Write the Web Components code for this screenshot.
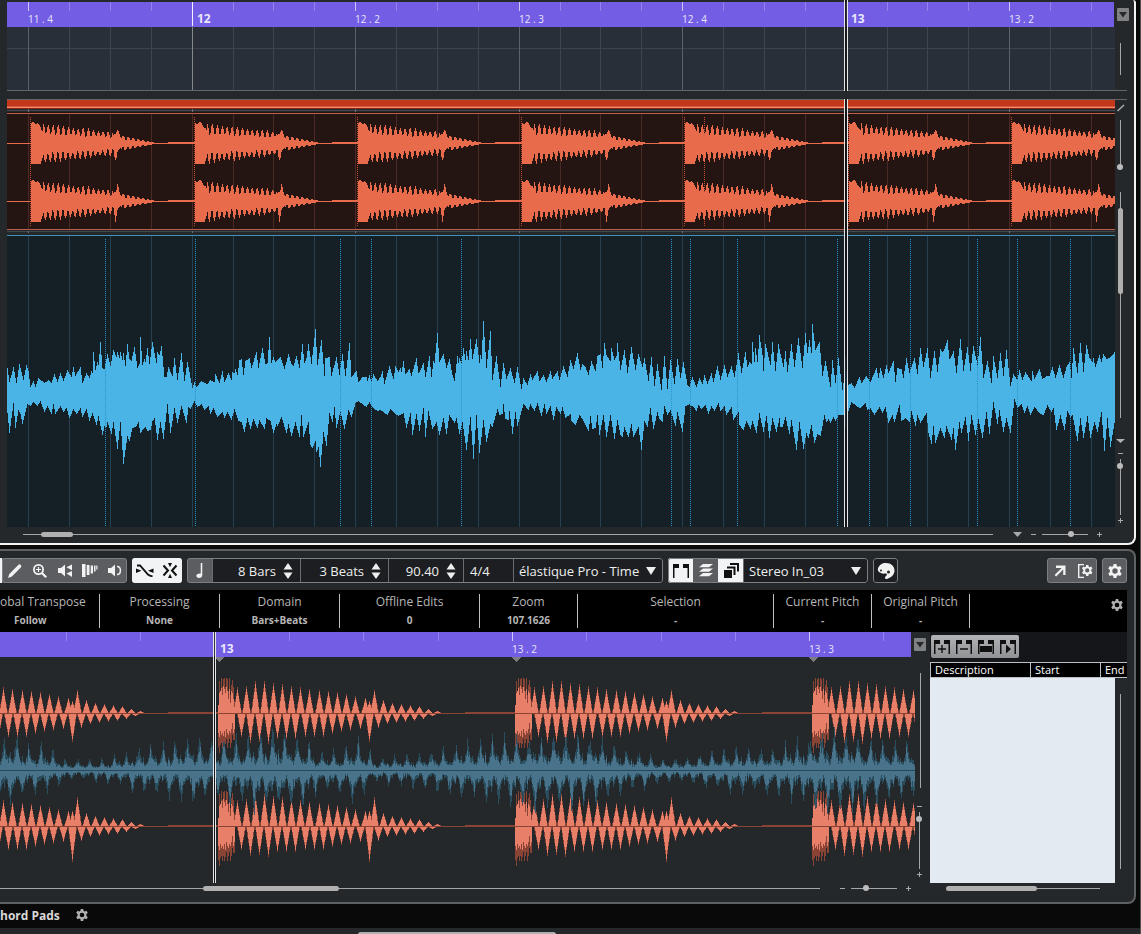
<!DOCTYPE html>
<html lang="en">
<head>
<meta charset="utf-8">
<title>Audio Editor</title>
<style>
  html, body { margin: 0; background: #090909; }
  body { font-family: "Open Sans", "Noto Sans", sans-serif; font-size: 12px; color: #e4e4e4; overflow: hidden; }
</style>
</head>
<body>
<daw-app></daw-app>
<script>
const RESET = `
  *, *::before, *::after { box-sizing: border-box; }
  button, input, select { font: inherit; color: inherit; margin: 0; padding: 0; border: 0; border-radius: 0; background: none; min-width: 0; }
  svg { display: block; }
`;
function define(name, html, setup) {
  const tpl = document.createElement('template');
  customElements.define(name, class extends HTMLElement {
    connectedCallback() {
      if (this.shadowRoot) return;
      tpl.innerHTML = typeof html === 'function' ? html(this) : html;
      this.attachShadow({ mode: 'open' }).append(tpl.content.cloneNode(true));
      if (setup) setup(this, this.shadowRoot);
    }
  });
}

/* ---------- icons ---------- */
const GEAR = '<path fill-rule="evenodd" d="M6.6 0h2.8l.5 2.2 1.2.6 2.1-.8 1.5 2.4-1.6 1.6v2l1.6 1.6-1.5 2.4-2.1-.8-1.2.6-.5 2.2H6.600l-.5-2.200-1.200-.6-2.100.8-1.500-2.400L2.900 8V6L1.300 4.400 2.800 2l2.100.8 1.200-.6zM8 4.300a2.700 2.700 0 1 0 0 5.400 2.700 2.700 0 0 0 0-5.400z"/>';
const ICONS = {
  pencil: ['16 16', '<path d="M1 15l1.300-4L11.500 1.800q1.200-1 2.300.1t.2 2.300L4.900 13.600z"/>'],
  zoom: ['16 16', '<circle cx="6.500" cy="6.500" r="4.600" fill="none" stroke="currentColor" stroke-width="1.800"/><path d="M10.400 8.900l4.600 4.600-1.600 1.600-4.600-4.600zM4 5.900h5v1.200H4zM5.900 4h1.200v5H5.900z"/>'],
  scrub: ['16 16', '<path d="M1 5h3l4-3.500v12L4 10H1zM9.500 4.300L15 1.500v5.700zM9.500 10.500L15 8v6z"/>'],
  warp: ['16 16', '<path d="M0 1h3.500v13H0zM4.700 2H7.500v10H4.700zM8.700 2.500H11v8H8.700zM12 2.500h1.500v6H12zM14.300 2.500h1.200v4h-1.200z"/>'],
  speaker: ['16 16', '<path d="M1 5h3l4-3.500v12L4 10H1z"/><path d="M10 3.500q3.400-.2 3.400 4t-3.400 4" fill="none" stroke="currentColor" stroke-width="1.500"/>'],
  snapzero: ['18 16', '<path d="M1 2.500h3l8 9q2 1.800 4.500 1.500" fill="none" stroke="currentColor" stroke-width="1.800"/><path d="M0 5.500L5.500 7.800 0 10zM17.500 5.500V10L12 7.800z"/>'],
  snap: ['16 16', '<path d="M6 0h4L8 4.200zM6 15h4L8 10.800z"/><path d="M1.500 2.500L6 7.500l-4.500 5M14.500 2.500L10 7.500l4.500 5" fill="none" stroke="currentColor" stroke-width="2"/>'],
  note: ['16 16', '<path d="M8.700 0h1.600v12q0 3-3.600 3-2.400-.2-2.400-2.300 .5-2.500 4.400-2.300z"/>'],
  range: ['18 16', '<path d="M1 1h6v4H2.500v10H1zM11 1h6v14h-1.500V5H11z"/>'],
  layers: ['16 16', '<path d="M5 1h10l-4 3.200H1zM5 5.500h10l-4 3.200H1zM5 10h10l-4 3.200H1z"/>'],
  stack: ['16 16', '<path d="M1 7h8v8H1z"/><path d="M4 4.500h7.500V12M7 1h8v7.500" fill="none" stroke="currentColor" stroke-width="2"/>'],
  palette: ['18 16', '<path d="M9 0c5 0 8.500 3.300 8.500 7.500 0 4-3 7-7.500 8.500-2 .4-3-1.500-1-3 1.400-1 1.200-2.500-.5-2.500-2.500.3-3.500.2-4.500-.5C1 9 .5 7 1 5.500 2 2 5 0 9 0z"/><circle cx="11.500" cy="9" r="1.500" fill="#222"/><circle cx="4" cy="7.500" r="1" fill="#222"/>'],
  arrow: ['16 16', '<path d="M4 2.500h9.500V12h-2.300V6.500L4.200 13.500 2.600 12l7-7H4z"/>'],
  setup: ['18 16', '<path d="M8 1.600H2.700v12.800H8" fill="none" stroke="currentColor" stroke-width="1.400"/><g transform="translate(5 2) scale(.78)">' + GEAR + '</g>'],
  gear: ['16 14', GEAR],
  markadd: ['16 16', '<path d="M0 1h6v4H1.500v10H0zM10 1h6v14h-1.500V5H10z"/><path d="M8 6v8M4 10h8" stroke="currentColor" stroke-width="1.400"/>'],
  markdel: ['16 16', '<path d="M0 1h6v4H1.500v10H0zM10 1h6v14h-1.500V5H10z"/><path d="M4 10h8" stroke="currentColor" stroke-width="1.400"/>'],
  markall: ['16 16', '<path d="M0 1h6v4H1.500v10H0zM10 1h6v14h-1.500V5H10zM2 7h12v6H2z"/>'],
  markplay: ['16 16', '<path d="M0 1h6v4H1.500v10H0zM10 1h6v14h-1.500V5H10zM6 5.500l5 4.500-5 4.500z"/>'],
  down: ['10 8', '<path d="M0 0h10L5 8z"/>'],
  spin: ['10 16', '<path d="M5 0l4.500 6.500h-9zM5 16L.5 9.500h9z"/>'],
  minus: ['7 7', '<path d="M1 3h5v1H1z"/>'],
  plus: ['7 7', '<path d="M1 3h5v1H1zM3 1h1v5H3z"/>'],
  fade: ['8 8', '<path d="M.5 7L7 1" stroke="currentColor" stroke-width="1.400"/>']
};
define('daw-icon', el => {
  const [box, art] = ICONS[el.getAttribute('name')], [w, h] = box.split(' ');
  return `<style>:host{display:block;flex:none}svg{display:block;fill:currentColor}</style>
  <svg width="${w}" height="${h}" viewBox="0 0 ${w} ${h}" aria-hidden="true">${art}</svg>`;
});

/* ---------- small controls ---------- */
define('tool-button', el => `<style>${RESET}
  :host { display: block; width: 25px; flex: none; color: #f2f2f2; background: #5b5d61; }
  :host([on]) { background: #f2f3f4; color: #101010; }
  :host([plain]) { background: none; color: #101010; width: 22px; }
  :host([dark]) { background: #1c1e21; }
  button { display: flex; align-items: center; justify-content: center; width: 100%; height: 100%; }
</style><button aria-label="${el.getAttribute('label')}"><daw-icon name="${el.getAttribute('icon')}"></daw-icon></button>`);

define('tool-group', `<style>
  :host { display: flex; position: relative; height: 25px; flex: none; border-radius: 3px; overflow: hidden; background: #1c1e21; }
  :host::after { content: ""; position: absolute; inset: 0; border: 1px solid #7c7e81; border-radius: 3px; pointer-events: none; }
  :host([bright])::after { border-color: #f2f3f4; }
</style><slot></slot>`);

define('value-field', el => `<style>${RESET}
  :host { display: flex; flex: none; align-items: center; box-sizing: border-box; border-left: 1px solid #6a6c6f; background: #1c1e21; color: #eee; font-size: 13px; }
  input { flex: 1; width: 0; height: 23px; text-align: ${el.hasAttribute('spin') ? 'right' : 'left'}; padding-left: 6px; }
  button { width: 24px; height: 100%; display: flex; align-items: center; justify-content: center; }
</style><input aria-label="${el.getAttribute('label')}" value="${el.getAttribute('value')}">${
  el.hasAttribute('spin') ? '<button aria-label="Step value"><daw-icon name="spin"></daw-icon></button>' : ''}`);

define('drop-down', el => `<style>${RESET}
  :host { display: grid; grid-template: 100% / 1fr 24px; align-items: center; flex: none; box-sizing: border-box; border-left: 1px solid #6a6c6f; background: #1c1e21; color: #eee; font-size: 13px; }
  select { appearance: none; grid-area: 1 / 1 / 2 / 3; height: 100%; padding-left: 5px; }
  daw-icon { grid-area: 1 / 2; pointer-events: none; justify-self: center; }
</style><select aria-label="${el.getAttribute('label')}"><option>${el.getAttribute('value')}</option></select><daw-icon name="down"></daw-icon>`);

define('menu-box', `<style>${RESET}
  :host { display: block; width: 12px; height: 13px; flex: none; }
  button { width: 100%; height: 100%; background: #7f8183; border-radius: 1px; display: flex; align-items: center; justify-content: center; color: #26292c; }
</style><button aria-label="Ruler menu"><svg width="8" height="6" viewBox="0 0 8 6"><path fill="currentColor" d="M0 0h8L4 5.500z"/></svg></button>`);

define('scroll-bar', `<style>
  :host { display: block; position: relative; height: 5px; flex: none; }
  :host([vertical]) { height: auto; width: 5px; }
  i { display: block; height: 1px; background: #a4a6a7; position: absolute; left: 0; right: 0; top: 2px; }
  b { display: block; position: absolute; top: 0; height: 5px; border-radius: 3px; background: #b0b0b0; left: var(--from, 0); width: var(--size, 0); }
  :host([vertical]) i { width: 1px; height: auto; left: 2px; top: 0; bottom: 0; right: auto; }
  :host([vertical]) b { left: 0; width: 5px; top: var(--from, 0); height: var(--size, 0); }
</style><i></i><b></b>`);

define('zoom-slider', el => {
  const v = el.hasAttribute('vertical');
  return `<style>${RESET}
  :host { display: flex; align-items: center; flex: none; color: #a8a9aa; ${v ? 'flex-direction: column; width: 7px;' : ''} }
  input { appearance: none; display: block; ${v ? 'writing-mode: vertical-lr; width: 7px; height: var(--len); margin: var(--gap) 0;' : 'height: 7px; width: var(--len); margin: 0 8px 0 5px;'} }
  input::-webkit-slider-runnable-track { ${v ? 'width: 7px; background: linear-gradient(90deg, transparent 3px, #a4a6a7 3px 4px, transparent 4px)' : 'height: 7px; background: linear-gradient(transparent 3px, #a4a6a7 3px 4px, transparent 4px)'}; }
  input::-webkit-slider-thumb { appearance: none; width: 6px; height: 6px; border-radius: 3px; background: #bcbcbc; }
  button { flex: none; display: block; }
  </style>${el.hasAttribute('bare') ? '' : '<button aria-label="Zoom out"><daw-icon name="minus"></daw-icon></button>'}
  <input type="range" aria-label="Zoom" value="${el.getAttribute('value')}">
  ${el.hasAttribute('bare') ? '' : '<button aria-label="Zoom in"><daw-icon name="plus"></daw-icon></button>'}`;
});

/* ---------- timeline drawing ---------- */
const vlines = (xs, y0, y1) => xs.map(x => `M${x} ${y0}h1v${y1 - y0}h-1z`).join('');
const GRID = Array.from({ length: 60 }, (_, k) => Math.round(21.2 + 40.875 * k));
const BEATS = GRID.filter((_, k) => k % 4 === 0), SUBS = GRID.filter((_, k) => k % 4);
const CANVAS = ':host{display:block;overflow:hidden;position:relative} svg{display:block;width:100%;height:100%;shape-rendering:crispEdges} text{font-family:"Open Sans","Noto Sans",sans-serif;fill:#e9e6fb}';

define('time-ruler', el => {
  const lower = el.hasAttribute('editor');
  const beats = lower ? [512, 809] : BEATS.filter((_, i) => i !== 1 && i !== 5);
  const subs = lower ? [66, 140, 289, 363, 438, 586, 661, 735, 883] : SUBS;
  const labels = lower ? [[220, '13', 1], [512, '13 . 2'], [809, '13 . 3']]
    : [[21, '11 . 4'], [190, '12', 1], [348, '12 . 2'], [512, '12 . 3'], [675, '12 . 4'], [844, '13', 1], [1002, '13 . 2']];
  return `<style>${CANVAS} :host{height:25px;background:#725de4}</style><svg>
    <path fill="#9482f0" d="${vlines(subs, 0, 9)}"/><path fill="#cdc4fa" d="${vlines(beats, 0, 9)}"/>
    <path fill="#f4f2ff" d="${vlines(lower ? [214] : [185, 839], 0, 24)}"/>
    ${labels.map(([x, t, b]) => `<text x="${x}" y="21" ${b ? 'font-size="12" font-weight="700"' : 'font-size="10"'}>${t}</text>`).join('')}</svg>`;
});

define('empty-lane', `<style>${CANVAS} :host{height:64px;background:#282f39;border-bottom:1px solid #65686b;box-sizing:border-box}</style><svg>
  <path fill="#3d444d" d="M0 21h4000v1H0z${vlines(SUBS, 0, 63)}"/><path fill="#5c6269" d="${vlines(BEATS, 0, 63)}"/>
  <path fill="#85888a" d="${vlines([185], 0, 63)}"/></svg>`);

/* per-column decay of a drum hit in the overview: [above, below] for each pixel */
function hitColumns(seed, low) {
  const cols = [], shape = [.1, .75, 1, .6, 0];
  for (let i = 0; i < 128; i++) {
    const d = i / 100, n = Math.sin(i * 7.3 + seed * 3.1) * .9;
    let up, dn;
    if (i < 12) { up = 20 - (i > 6 ? (i - 6) * 1.5 : 0) + n; dn = 20 - (i > 9 ? (i - 9) * 3 : 0) + n * .5; }
    else if (i < 82) {
      const pk = 20.500 - d * 12, tr = 10 - d * 5;
      up = tr + (pk - tr) * shape[i % 5] + n; dn = tr + (pk - tr) * shape[(i + 3) % 5] - n;
    } else if (i < 91) {
      up = [8, 9, 9, 11, low ? 17 : 13, low ? 14 : 12, 9, 6, 5][i - 82];
      dn = [6, 13, low ? 20 : 16, 14, 8, 6, 5, 4, 5][i - 82];
    } else {
      const e = Math.max(0, (125 - i) / 34);
      up = e * (3.500 + 4 * shape[i % 5]); dn = e * (3 + 4 * shape[(i + 3) % 5]);
    }
    cols.push([Math.round(up), Math.round(dn)]);
  }
  return cols;
}
function hitPath(cy, low) {
  let d = `M0 ${cy}h4000v1H0z`;
  for (let k = 0; k < 7; k++) {
    const x0 = Math.round(24 + 163.5 * k);
    hitColumns(k, low).forEach(([u, n], i) => { d += `M${x0 + i} ${cy - u}h1v${u + n + 1}h-1z`; });
    d += `M${x0 + 137} ${cy - 1}h27v2h-27z`;
  }
  return d;
}
const HITS = Array.from({ length: 7 }, (_, k) => Math.round(23.300 + 163.5 * k));
define('drum-clip', () => `<style>${CANVAS} :host{height:136px;background:#25282b}</style><svg>
  <path fill="#65686b" d="M0 0h4000v1H0z"/><path fill="#c3371b" d="M0 1h4000v6H0z"/>
  <path fill="#d9553a" d="M0 7h4000v1H0z"/><path fill="#f58a6c" d="M0 8h4000v1H0z"/><path fill="#8b2510" d="M0 9h4000v1H0z"/>
  <path fill="#42484c" d="M0 11h4000v1H0zM0 132h4000v1H0z"/>
  <path fill="#241513" d="M0 13h4000v118H0z"/>
  <path fill="#4b2a26" d="${vlines(GRID, 15, 130)}"/>
  <path fill="#6b6e70" d="${vlines(BEATS, 10, 13)}${vlines(BEATS, 132, 134)}"/>
  <path fill="#b9604c" d="M0 14h4000v1H0zM0 130h4000v1H0z"/>
  <path stroke="#c84e31" stroke-dasharray="1 1" d="${[...HITS, 697].map(x => `M${x + .5} 18V127`).join('')}"/>
  <path fill="#e86c4b" d="${hitPath(44)}${hitPath(102, true)}"/></svg>`);

/* vertices of the synth waveform, three units per pixel, one run per screen segment [pixel offset, x, y, ...] */
const TOP = [[0, '22,204 28,245 40,202 50,250 59,192 70,240 80,195 84,212 91,260 100,243 107,260 116,234 133,248 145,240 155,248 163,222 171,245 182,219 191,242 202,210 213,230 221,201 227,228 240,202 248,248 260,219 268,234 273,213 277,218 281,156 286,210 292,186 296,194 301,126 307,204 314,208 322,162 330,198 341,150 348,172 352,156 357,174 362,155 367,180 370,159 377,198 383,132 388,178 393,182 403,141 411,204 417,192 421,111 427,194 432,178 437,186 442,145 447,192 458,126 468,188 473,156 478,166 485,138 494,230 498,230 505,201 516,228 524,174 533,240 544,159 553,243 563,186 577,264 583,246 588,262 605,243 622,252 632,240 642,246 647,222 658,248 667,213 674,245 686,219 693,240 697,215 703,220 707,207 711,224 719,180 725,178 731,224 737,183 748,174 755,204 769,156 776,204 788,144 796,192 801,190 808,111 814,190 820,171 826,186 833,180 842,171 853,207 866,162 873,192 879,198 889,168 897,204 908,132 913,188 920,174 926,132 935,192 946,87 953,194 965,120 973,228 977,174 988,172 995,228 1009,171 1017,224 1028,162 1037,228 1048,129 1054,232 1068,213 1075,246 1088,232 1098,232 1103,242 1108,225 1113,246 1121,222 1133,242'],
[380, '0,230 7,213 14,252 28,198 40,237 47,198 56,215 60,204 65,216 70,183 77,222 88,207 95,228 109,174 116,219 120,210 130,188 137,231 149,168 155,230 160,183 164,190 171,99 178,186 190,162 198,204 209,177 218,226 223,242 232,168 235,190 239,174 245,190 251,144 256,180 260,153 266,180 271,117 276,176 283,147 290,117 297,190 302,165 305,178 310,63 318,204 330,93 338,240 349,168 360,260 370,189 379,236 391,204 403,250 411,201 424,267 431,234 443,255 451,222 458,240 472,213 479,243 490,225 498,246 511,213 518,237 532,213 538,240 550,198 561,230 571,180 580,207 592,159 602,210 608,192 615,200 626,225 634,183 646,212 653,168 660,162 668,204 673,129 680,166 690,182 693,144 702,180 708,168 712,129 722,210 733,150 741,219 753,141 766,210 775,162 786,200 794,174 805,242 813,171 823,258 833,192 844,270 853,168 862,267 871,180 884,252 892,177 902,234 910,186 922,255 929,260 936,231 948,262 957,234 968,252 974,225 983,252 994,219 1001,246 1012,198 1021,240 1033,195 1042,230 1053,198 1064,230 1076,159 1085,218 1097,156 1103,200 1108,186 1113,192 1117,126 1123,186 1127,144 1131,186 1138,105 1146,165 1150,212 1157,132 1170,195 1178,126 1186,212 1195,132'],
[780, '0,162 9,200 15,153 23,215 34,132 43,200 54,114 66,204 77,99 83,158 89,120 93,158 98,72 107,150 118,126 128,228 137,183 150,260 157,180 166,250 176,174 187,270 192,228 196,172 203,255 213,250 224,264 237,231 245,250 258,228 272,245 289,204 296,234 302,204 309,234 320,195 324,220 340,183 346,245 353,204 363,208 369,234 380,174 389,220 402,174 411,222 422,144 430,200 443,144 452,234 462,153 471,215 482,147 487,156 492,146 502,120 508,178 513,168 520,153 529,220 542,117 551,213 562,141 571,213 580,138 592,196 601,111 610,234 622,183 633,250 641,168 652,234 662,159 671,228 680,150 692,258 701,222 711,240 719,210 728,240 736,216 745,230 753,244 757,213 763,236 778,207 787,236 798,228 807,228 817,201 825,234 838,195 850,234 860,200 867,186 873,234 880,144 892,220 901,129 911,216 920,135 928,174 938,186 941,174 947,200 958,165 964,186 970,162 978,178 988,174 996,164 1005,153']];
const BOTTOM = [[0, '22,340 28,399 40,309 47,384 56,330 60,342 68,372 82,312 91,318 100,306 113,318 122,303 134,336 142,318 155,342 161,312 167,342 182,318 190,336 200,324 209,354 221,328 229,342 240,324 248,350 260,328 269,362 278,340 290,375 296,348 307,405 312,378 318,382 323,366 334,402 341,366 352,446 362,366 371,492 383,408 388,422 397,384 408,378 414,366 421,398 428,390 436,380 442,393 450,390 457,362 463,354 472,420 482,366 491,416 502,312 511,398 524,324 533,370 544,318 558,370 565,320 572,326 583,303 593,320 603,312 613,330 624,318 632,342 641,324 652,350 667,336 674,354 682,336 694,360 704,327 714,363 724,366 734,396 743,354 751,386 760,357 772,384 779,360 793,386 800,354 810,362 820,398 829,372 833,378 844,350 858,398 866,372 874,408 886,366 898,410 904,345 911,410 924,366 932,434 938,444 945,424 950,455 956,440 961,500 970,396 978,438 987,340 996,366 1003,321 1010,384 1022,333 1032,386 1046,330 1054,352 1067,310 1075,303 1087,312 1099,322 1109,306 1121,324 1132,332'],
[380, '0,330 10,336 22,345 30,326 42,338 56,348 70,340 80,384 91,339 98,405 109,342 118,392 130,324 137,410 146,333 158,386 168,366 178,404 190,354 199,402 209,345 223,370 230,354 238,402 247,366 259,450 272,351 280,476 290,345 298,458 310,360 320,426 331,372 338,380 352,327 358,345 368,342 370,312 377,356 385,360 389,333 398,402 406,336 413,378 430,312 445,330 451,312 464,333 473,309 484,348 493,312 500,342 512,318 521,360 530,322 542,342 548,321 557,354 570,342 575,362 586,374 598,345 608,356 625,392 631,348 637,386 647,384 653,345 659,404 671,345 679,410 691,345 703,416 712,360 720,404 728,412 734,381 746,412 754,372 760,412 776,380 784,450 794,363 803,381 812,324 820,386 833,336 838,356 848,366 853,318 862,346 871,330 886,378 893,336 908,396 916,318 927,312 940,320 949,333 956,315 963,326 975,316 984,342 995,318 1002,332 1014,310 1020,333 1034,318 1040,345 1053,321 1061,360 1074,336 1078,375 1090,390 1098,362 1110,388 1116,363 1130,398 1137,339 1150,396 1158,348 1169,414 1177,354 1188,396 1197,354'],
[780, '0,380 8,380 15,350 28,402 34,360 49,450 58,366 70,446 78,399 85,414 94,376 103,429 112,402 121,408 132,346 138,366 146,357 152,369 160,350 167,362 176,346 190,345 196,380 200,320 206,333 213,306 230,318 242,323 255,310 262,330 272,324 284,345 297,321 306,340 315,321 325,368 338,346 344,366 358,315 364,363 376,354 389,366 395,333 405,378 413,346 422,370 438,340 446,398 454,432 461,378 466,428 480,384 492,414 500,378 514,420 521,384 527,450 537,366 544,400 557,351 566,422 575,345 587,404 596,357 607,414 619,336 629,402 640,306 652,372 658,330 670,396 680,354 691,400 703,297 712,324 725,312 733,338 742,318 751,346 764,320 778,339 790,346 803,315 813,336 819,324 830,390 841,345 852,390 861,333 870,352 878,345 892,423 902,354 911,414 922,348 932,414 944,366 952,396 965,336 973,452 982,354 992,440 1005,350']];
const points = runs => runs.flatMap(([off, s]) => s.split(' ').map(p => p.split(',')).map(([x, y]) => [Math.floor(x / 3) + off - 7, Math.round(y / 3) + 65]));
/* one filled column for each pixel, with straight runs between the vertices */
function columns(pts) {
  const out = [];
  for (let i = 0; i < pts.length - 1; i++) {
    const [x0, y0] = pts[i], [x1, y1] = pts[i + 1];
    for (let x = x0; x < x1; x++) out[x] = Math.round(y0 + (y1 - y0) * (x - x0) / (x1 - x0));
  }
  return out;
}
define('synth-clip', () => {
  const t = columns(points(TOP)), b = columns(points(BOTTOM));
  const wave = t.map((y, x) => b[x] === undefined ? '' : `M${x} ${y}h1V${b[x]}h-1z`).join('');
  const marks = [105, 195, 340, 371, 461, 671, 690, 737, 837, 869, 910, 977, 1017, 1070].map(x => `M${x - 7 + .5} 4V291`).join('');
  return `<style>${CANVAS} :host{height:292px;background:#141f26}</style><svg>
  <path fill="#4390b4" d="M0 0h4000v1H0z"/><path fill="#26404f" d="${vlines(GRID, 1, 292)}"/>
  <path fill="#4ab4e7" d="${wave}"/><path stroke="#2c93c9" stroke-dasharray="1 1" d="${marks}"/></svg>`;
});

define('play-head', `<style>:host{display:block;position:absolute;top:0;bottom:0;box-sizing:border-box;border:solid #e6e6e6;border-width:0 1px;background:rgba(14,16,20,.85)}</style>`);

/* zoomed editor waveforms */
const UP = [[19, 26], [28, 27], [37, 32], [46, 32], [55, 30], [64, 29], [73, 27], [82, 26], [91, 24], [101, 23], [110, 22], [119, 21], [128, 19], [137, 17], [147, 15], [151, 12], [156, 23], [165, 13], [174, 10], [183, 9], [192, 8], [201, 7], [210, 4], [219, 2]];
const DOWN = [[23, 23], [32, 29], [41, 28], [50, 30], [59, 25], [68, 25], [77, 25], [87, 23], [96, 23], [105, 23], [114, 20], [123, 18], [132, 17], [142, 15], [151, 28], [160, 14], [169, 10], [178, 9], [187, 8], [196, 7], [205, 5], [214, 2]];
/* first 17 columns of each hit: full height of the transient, and its denser core */
const ATTACK = [[8, 34], [32, 40], [22, 32], [35, 30], [26, 35], [34, 30], [35, 35], [26, 31], [35, 26], [34, 35], [22, 30], [35, 26], [18, 35], [28, 30], [33, 22], [26, 27], [12, 27]];
const CORE = [[8, 20], [20, 24], [22, 18], [25, 22], [18, 20], [27, 23], [24, 18], [20, 24], [26, 16], [22, 20], [14, 22], [24, 18], [10, 20], [22, 16], [20, 10], [14, 20], [6, 16]];
function lobes(cy, low, k) {
  let d = '';
  for (const x0 of [-79, 218, 515, 812]) {
    (k < 1 ? CORE : ATTACK).forEach(([u, n], i) => { if (x0 > 0) d += `M${x0 + i} ${cy - u}h1v${u + n}h-1z`; });
    for (const [list, dir] of [[UP, -1], [DOWN, 1]]) for (const [px, amp] of list) {
      const spike = low && (px === 156 || px === 151) ? 1.250 : 1;
      for (let i = -4; i <= 4; i++) {
        const h = Math.round(amp * spike * k * Math.max(0, 1 - Math.abs(i) / (k < 1 ? 3.800 : 4.500)));
        const x = x0 + px + i;
        if (h > 0 && x >= x0 && x < 915) d += dir < 0 ? `M${x} ${cy - h}h1v${h}h-1z` : `M${x} ${cy + 1}h1v${h}h-1z`;
      }
    }
    if (k === 1) d += `M${x0 + 219} ${cy}h28v1h-28zM${x0 + 247} ${cy - 1}h50v2h-50z`;
  }
  return d;
}
const ENV = [[0, 38], [15, 40], [25, 26], [45, 28], [55, 20], [65, 12], [85, 11], [115, 15], [145, 27], [170, 28], [195, 36], [205, 32], [213, 26], [240, 36], [280, 41], [300, 38], [320, 22], [340, 22], [355, 34], [375, 13], [400, 17], [430, 20], [460, 29], [500, 38], [515, 40], [560, 36], [600, 36], [630, 22], [660, 14], [680, 12], [700, 18], [740, 25], [780, 25], [812, 38], [850, 40], [880, 34], [915, 28]];
function backing(bright) {
  let d = '', e = 0;
  for (let x = 0; x < 915; x++) {
    while (ENV[e + 1][0] <= x) e++;
    const [x0, a] = ENV[e], [x1, b] = ENV[e + 1], env = a + (b - a) * (x - x0) / (x1 - x0);
    const r = (n, at = x) => Math.abs(Math.sin(at * 12.9898 + n * 78.233) * 43758.5) % 1;
    const p = Math.abs(((x + 8) % 12.200) / 6.1 - 1), q = Math.abs(((x + 3) % 6.1) / 3.050 - 1);
    const c = Math.floor((x + 8) / 12.200), g = .65 + .4 * r(7, c), f = .65 + .4 * r(9, c);
    let u = env * (.2 + .75 * g * p ** 2.500 + .35 * q * r(1)), n = env * (.2 + .75 * f * (1 - p) ** 2.200 + .4 * q * r(2));
    if (bright) { u *= .5 + .35 * r(3); n *= .5 + .35 * r(4); }
    d += `M${x} ${113 - Math.round(u)}h1v${Math.round(u) + Math.round(n)}h-1z`;
  }
  return d;
}
define('sample-view', () => `<style>${CANVAS} :host{height:226px;background:#25282b}</style><svg>
  <path fill="#8a4436" d="${lobes(56, false, 1)}${lobes(169, true, 1)}"/>
  <path fill="#e87f68" d="${lobes(56, false, .9)}${lobes(169, true, .9)}"/>
  <path fill="#2b5163" d="${backing(false)}" opacity=".9"/><path fill="#48738a" d="${backing(true)}"/>
  <path fill="#25485a" d="M0 113h915v1H0z"/>
  <path fill="#8a4436" d="M0 56h915v1H0zM0 169h915v1H0z"/>
  <path fill="#7b7d80" d="M215 0h9l-4.500 5zM512 0h9l-4.500 5zM809 0h9l-4.500 5z"/></svg>`);

/* ---------- panels ---------- */
define('project-panel', `<style>${RESET}
  :host { display: block; padding-left: 7px; background: #25282b; border: solid #f4f4f4; border-width: 0 2px 2px 0; border-radius: 0 3px 8px 0; box-sizing: border-box; }
  .row { display: flex; }
  .main { flex: 1; min-width: 0; position: relative; }
  .upper .main { padding-top: 2px; }
  .upper time-ruler { margin-right: 1px; }
  .side { width: 12px; margin-right: 7px; padding-right: 1px; display: flex; flex-direction: column; align-items: center; flex: none; color: #b0b0b0; }
  .upper .side { border-bottom: 1px solid #65686b; }
  .lower { margin-top: 8px; }
  .lower .side { border-top: 1px solid #65686b; }
  .upper menu-box { margin: 8px 0 0 5px; }
  .upper scroll-bar { margin-top: 22px; height: 32px; }
  .lower daw-icon { margin-top: 4px; }
  zoom-slider.wave { --len: 50px; --gap: 0; margin-top: 8px; }
  .lower scroll-bar { margin-top: 22px; height: 226px; --from: 16px; --size: 86px; }
  .lower .tri { margin: 21px 0 6px; }
  zoom-slider.track { --len: 56px; --gap: 2px; }
  .foot { height: 16px; display: flex; align-items: center; padding: 0 31px 2px 16px; color: #a8a9aa; }
  .foot scroll-bar { flex: 1; --from: 18px; --size: 32px; margin-right: 20px; }
  .foot zoom-slider { --len: 46px; margin-left: 8px; }
</style>
<div class="row upper"><div class="main"><time-ruler></time-ruler><empty-lane></empty-lane><play-head style="left:837px;width:4px"></play-head></div>
  <div class="side"><menu-box></menu-box><scroll-bar vertical></scroll-bar></div></div>
<div class="row lower"><div class="main"><drum-clip></drum-clip><synth-clip></synth-clip><play-head style="left:837px;width:4px"></play-head></div>
  <div class="side"><daw-icon name="fade"></daw-icon><zoom-slider class="wave" vertical bare value="100"></zoom-slider><scroll-bar vertical></scroll-bar>
  <svg class="tri" width="9" height="5" viewBox="0 0 9 5"><path fill="currentColor" d="M0 0h9L4.500 4z"/></svg>
  <zoom-slider class="track" vertical value="8"></zoom-slider></div></div>
<div class="foot"><scroll-bar></scroll-bar><svg width="9" height="5" viewBox="0 0 9 5"><path fill="currentColor" d="M0 0h9L4.500 5z"/></svg><zoom-slider value="66"></zoom-slider></div>`);

define('editor-toolbar', `<style>
  :host { display: flex; gap: 5px; height: 39px; padding: 7px 7px 0 0; box-sizing: border-box; }
  .space { flex: 1; }
  .first { border-left: 2px solid #f2f3f4; border-radius: 0 3px 3px 0; }
</style>
<tool-group class="first"><tool-button icon="pencil" label="Draw"></tool-button><tool-button icon="zoom" label="Zoom"></tool-button><tool-button icon="scrub" label="Scrub"></tool-button><tool-button icon="warp" label="Time warp"></tool-button><tool-button icon="speaker" label="Audition"></tool-button></tool-group>
<tool-group bright><tool-button on icon="snapzero" label="Snap to zero crossing"></tool-button><tool-button on icon="snap" label="Snap"></tool-button></tool-group>
<tool-group><tool-button icon="note" label="Musical mode"></tool-button>
  <value-field spin label="Bars" value="8 Bars" style="width:88px"></value-field><value-field spin label="Beats" value="3 Beats" style="width:88px"></value-field><value-field spin label="Tempo" value="90.40" style="width:75px"></value-field><value-field label="Time signature" value="4/4" style="width:50px"></value-field><drop-down label="Algorithm" value="élastique Pro - Time" style="width:150px"></drop-down></tool-group>
<tool-group><tool-button on icon="range" label="Show regions"></tool-button><tool-button icon="layers" label="Show layers"></tool-button><tool-button on icon="stack" label="Edit active clip"></tool-button><drop-down label="Edited clip" value="Stereo In_03" style="width:125px"></drop-down></tool-group>
<tool-group><tool-button dark icon="palette" label="Event colors"></tool-button></tool-group>
<span class="space"></span>
<tool-group><tool-button icon="arrow" label="Open in separate window"></tool-button><tool-button icon="setup" label="Window zones"></tool-button></tool-group>
<tool-group><tool-button icon="gear" label="Toolbar setup"></tool-button></tool-group>`);

define('info-cell', el => `<style>
  :host { display: flex; flex-direction: column; align-items: center; flex: none; height: 34px; border-right: 1px solid #c0c0c0; box-sizing: border-box; white-space: nowrap; color: #b6b6b6; }
  :host([edge]) { align-items: flex-start; }
  :host([edge]) b { padding-left: 14px; }
  span { line-height: 15px; } b { font-size: 10px; line-height: 22px; }
</style><span>${el.getAttribute('label')}</span><b>${el.getAttribute('value')}</b>`);

define('info-line', `<style>${RESET}
  :host { display: flex; height: 42px; margin-right: 7px; padding: 4px 3px 0 0; box-sizing: border-box; background: #000; overflow: hidden; }
  button { margin: 4px 0 0 auto; width: 14px; height: 14px; color: #b0b0b0; }
</style>
<info-cell edge label="obal Transpose" value="Follow" style="width:100px"></info-cell><info-cell label="Processing" value="None" style="width:120px"></info-cell><info-cell label="Domain" value="Bars+Beats" style="width:120px"></info-cell><info-cell label="Offline Edits" value="0" style="width:140px"></info-cell><info-cell label="Zoom" value="107.1626" style="width:98px"></info-cell><info-cell label="Selection" value="-" style="width:196px"></info-cell><info-cell label="Current Pitch" value="-" style="width:98px"></info-cell><info-cell label="Original Pitch" value="-" style="width:98px"></info-cell>
<button aria-label="Info line setup"><svg width="14" height="12" viewBox="0 0 16 14" fill="currentColor">${GEAR}</svg></button>`);

define('marker-list', `<style>${RESET}
  :host { display: block; width: 197px; flex: none; background: #25282b; margin-right: 7px; }
  .tools { height: 30px; background: #15161a; padding: 3px 1px; }
  .bar { display: inline-flex; height: 23px; width: 88px; background: linear-gradient(#b2b4b7, #8f9194); border-radius: 2px; }
  table { border-collapse: collapse; table-layout: fixed; width: 197px; background: #000; }
  th { height: 15px; padding: 0 0 0 4px; font-weight: 400; font-size: 11px; line-height: 14px; text-align: left; color: #fff; border: 1px solid #b9c0c8; border-right: 0; overflow: hidden; }
  .body { display: flex; height: 205px; }
  .list { flex: 1; background: #e3eaf2; }
  .body scroll-bar { margin: 16px 4px 14px 3px; }
  .foot { height: 12px; padding: 3px 27px 0 16px; }
  .foot scroll-bar { --from: 0px; --size: 91px; }
</style>
<div class="tools"><div class="bar"><tool-button plain icon="markadd" label="Add region"></tool-button><tool-button plain icon="markdel" label="Remove region"></tool-button><tool-button plain icon="markall" label="Select region"></tool-button><tool-button plain icon="markplay" label="Play region"></tool-button></div></div>
<table><colgroup><col style="width:100px"><col style="width:70px"><col></colgroup><thead><tr><th>Description</th><th>Start</th><th>End</th></tr></thead></table>
<div class="body"><div class="list"></div><scroll-bar vertical></scroll-bar></div>
<div class="foot"><scroll-bar></scroll-bar></div>`);

define('sample-editor', `<style>${RESET}
  :host { display: block; margin-top: 4px; background: #25282b; border: solid #5f6163; border-width: 2px 2px 2px 0; border-radius: 0 8px 8px 0; box-sizing: border-box; overflow: hidden; }
  .body { display: flex; }
  .wave { flex: 1; min-width: 0; }
  .view { position: relative; }
  time-ruler { margin-right: 4px; }
  .side { width: 15px; flex: none; display: flex; flex-direction: column; align-items: center; padding-right: 6px; }
  .side menu-box { margin: 6px 0 22px 1px; }
  .side scroll-bar { height: 115px; margin-left: 1px; }
  .side zoom-slider { --len: 57px; --gap: 2px; margin-top: 15px; }
  .foot { display: flex; align-items: center; height: 19px; margin-right: 3px; padding-bottom: 8px; }
  .foot scroll-bar { flex: 1; --from: 203px; --size: 136px; margin-right: 19px; }
  .foot zoom-slider { --len: 46px; }
</style>
<editor-toolbar></editor-toolbar><info-line></info-line>
<div class="body"><div class="wave"><div class="view"><time-ruler editor></time-ruler><sample-view></sample-view><play-head style="left:213px;width:3px"></play-head></div>
  <div class="foot"><scroll-bar></scroll-bar><zoom-slider value="29"></zoom-slider></div></div>
  <div class="side"><menu-box></menu-box><scroll-bar vertical></scroll-bar><zoom-slider vertical value="8"></zoom-slider></div>
  <marker-list></marker-list></div>`);

define('zone-tabs', `<style>${RESET}
  :host { display: flex; align-items: center; height: 24px; padding-bottom: 2px; box-sizing: border-box; background: #090909; }
  a { color: #d8d8d8; font-weight: 700; text-decoration: none; width: 75px; white-space: nowrap; }
  button { color: #b0b0b0; }
</style><a href="#chord-pads">hord Pads</a><button aria-label="Tab setup"><svg width="14" height="12" viewBox="0 0 16 14" fill="currentColor">${GEAR}</svg></button>`);

define('daw-app', `<style>
  :host { display: block; min-height: 100vh; border-right: 1px solid #4c4e50; box-sizing: border-box; background: #090909; }
  project-panel, sample-editor, zone-tabs { margin-right: 4px; }
  .tail { background: #25282b; height: 40px; padding: 4px 0 0 358px; }
  .tail scroll-bar { width: 198px; --size: 198px; }
</style><project-panel></project-panel><sample-editor></sample-editor><zone-tabs></zone-tabs><div class="tail"><scroll-bar></scroll-bar></div>`);
</script>
</body>
</html>
